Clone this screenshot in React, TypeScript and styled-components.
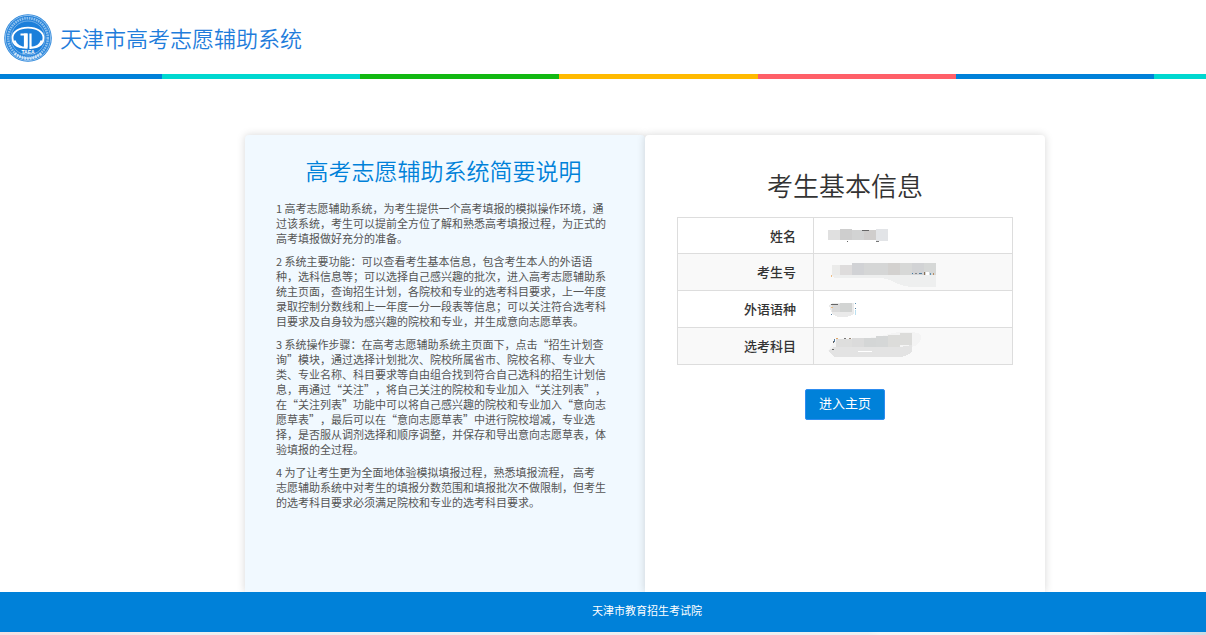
import React from 'react';
import styled, { createGlobalStyle } from 'styled-components';

const GlobalStyle = createGlobalStyle`
  * { box-sizing: border-box; }
  body {
    margin: 0;
    background: #fff;
    color: #333;
    font-family: "Noto Sans", "Noto Sans CJK SC", sans-serif;
    font-size: 11px;
    text-spacing-trim: space-all;
  }
  h1, h2, p { margin: 0; }
`;

const Page = styled.div`
  min-height: 100vh;
  display: flex;
  flex-direction: column;
`;

const Header = styled.header`
  height: 74px;
  padding: 2px 4px 0;
  display: flex;
  align-items: center;
  gap: 8px;
`;

const SiteTitle = styled.h1`
  font-family: "Noto Sans CJK SC", sans-serif;
  font-size: 22px;
  line-height: 32px;
  font-weight: 350;
  color: #1f7ddb;
  padding-bottom: 2px;
`;

const Stripe = styled.div`
  height: 5px;
  background: repeating-linear-gradient(
    90deg,
    #0081d9 0 198px,
    #00d8d0 198px 396px,
    #12b812 396px 595px,
    #ffba00 595px 794px,
    #ff5f68 794px 992px
  ) -36px 0 / calc(100% + 36px) 100% no-repeat;
`;

const Main = styled.main`
  flex: 1;
  display: flex;
  justify-content: center;
  padding: 56px 0 0 84px;
`;

const Card = styled.div`
  width: 800px;
  display: grid;
  grid-template-columns: 1fr 1fr;
`;

const Panel = styled.section<{ $tinted?: boolean }>`
  padding: ${(p) => (p.$tinted ? '18px 34px 0 31px' : '30px 32px 0')};
  background: ${(p) => (p.$tinted ? '#f1f9ff' : '#fff')};
  border-radius: 4px 4px 0 0;
  box-shadow: 0 0 8px rgba(0, 0, 0, 0.16);
`;

const GuideTitle = styled.h2`
  font-family: "Noto Sans CJK SC", sans-serif;
  font-size: 23px;
  line-height: 34px;
  font-weight: 350;
  text-align: center;
  color: #0081d9;
  margin-bottom: 14px;
`;

const GuideText = styled.p`
  line-height: 15px;
  color: #555;
  margin-bottom: 8px;
  white-space: nowrap;
  font-family: "Noto Sans CJK SC", sans-serif;
`;

const InfoTitle = styled(GuideTitle)`
  font-size: 26px;
  line-height: 40px;
  color: #333;
  margin-bottom: 12px;
`;

const InfoTable = styled.table`
  width: 100%;
  border-collapse: collapse;
  font-size: 13px;
`;

const Row = styled.tr`
  height: 37px;
  &:first-child { height: 36px; }
  &:nth-child(even) { background: #f9f9f9; }
`;

const Label = styled.th`
  width: 136px;
  padding: 0 17px 1px 0;
  border: 1px solid #ddd;
  text-align: right;
  font-weight: 500;
`;

const Value = styled.td`
  padding: 4px 0 0 8px;
  border: 1px solid #ddd;
`;

const Mask = styled.svg`
  display: block;
  margin: -4px 0;
`;

const Actions = styled.div`
  display: flex;
  justify-content: center;
  padding-top: 24px;
`;

const EnterButton = styled.button`
  width: 80px;
  height: 31px;
  padding: 0 0 4px;
  border: 1px solid #2d8cf0;
  border-radius: 2px;
  background: #0081d9;
  color: #fff;
  font-family: inherit;
  font-size: 13px;
  cursor: pointer;
`;

const Footer = styled.footer`
  position: relative;
  height: 40px;
  padding-left: 88px;
  background: #0081d9;
  color: #fff;
  line-height: 38px;
  text-align: center;
`;

const BottomEdge = styled.div`
  height: 3px;
  background: linear-gradient(90deg, #f8dfe0, #f5e4e4 8%, #eeeeef 14%, #eeeff0 72%, #f4f5f4 73%, #f1f3f4 90%, #ccdbe5);
`;

const Emblem = () => (
  <svg width="48" height="48" viewBox="0 0 48 48" role="img" aria-label="TAEA">
    <circle cx="24" cy="24" r="23.8" fill="#2583da" />
    <circle cx="24" cy="24" r="22.6" fill="none" stroke="#a9cff2" strokeWidth=".8" />
    <circle cx="24" cy="24" r="19.8" fill="none" stroke="#8dc0ee" strokeWidth="2.6" strokeDasharray="1.6 .8" />
    <circle cx="24" cy="24" r="17" fill="#1c7fda" stroke="#a9cff2" strokeWidth=".6" />
    <path d="M17 33.500C11.500 32 8.500 28.300 8.500 24c0-6 6.500-10.300 15.500-10.300S39.500 18 39.500 24c0 4.300-3 8-8.500 9.500" fill="none" stroke="#fff" strokeWidth="1.800" />
    <path d="M16.500 20.500h6v13.300c-6-.1-10.500-3-12-7.300" fill="none" stroke="#fff" strokeWidth="2" />
    <path d="M22.500 20.500h-1.500v12h1.500zM26.500 19.500v14.300c5.500-.1 9.800-3 11.200-7.300" fill="none" stroke="#fff" strokeWidth="2.200" />
    <text x="24" y="40" textAnchor="middle" fontFamily="Liberation Sans, sans-serif" fontWeight="700" fontSize="5" fill="#fff">TAEA</text>
    <path d="M10.500 39.500Q24 49.500 37.500 39.500" fill="none" stroke="#cfe4f8" strokeWidth="2.600" strokeDasharray="2 .7" />
  </svg>
);

type Block = [number, number, number, number, string];

const records: { label: string; blocks: Block[]; blob?: [string, string]; marks: Block[] }[] = [
  {
    label: '姓名',
    blocks: [[6, 10, 12, 10, '#e0e0e0'], [18, 9, 12, 11, '#cecece'], [30, 10, 12, 10, '#d2d3d3'], [42, 10, 12, 10, '#cfcdcc'], [54, 9, 12, 12, '#e2e4e7']],
    marks: [[40, 10, 7, 1, '#666'], [25, 21, 1, 1, '#666'], [54, 21, 3, 1, '#777']],
  },
  {
    label: '考生号',
    blob: ['M10 19h104v12H90q-12-1-20-6-6-3-14-3H12z', '#eeefef'],
    blocks: [[10, 9, 8, 10, '#ebebea'], [18, 9, 12, 10, '#dedcdc'], [30, 7, 12, 12, '#d1d2d5'], [42, 7, 24, 12, '#d5d6d6'], [66, 7, 12, 12, '#d3d1cf'], [78, 7, 12, 12, '#d7d8d7'], [90, 7, 12, 12, '#d2d3d5'], [102, 7, 12, 12, '#d6d8d7']],
    marks: [[9, 19, 1, 2, '#eebd86'], [90, 17, 1, 1, '#3e78a6'], [93, 17, 2, 1, '#888'], [97, 17, 3, 1, '#527d9c'], [102, 16, 1, 3, '#8c7158'], [104, 16, 3, 3, '#fff'], [108, 17, 1, 2, '#6393b3'], [111, 17, 1, 2, '#b98e66']],
  },
  {
    label: '外语语种',
    blob: ['M7 13q2-3 6-3h19v11q-6 4-14 3-5 0-8-4z', '#eaeaea'],
    blocks: [[10, 11, 8, 8, '#dadada'], [18, 10, 12, 9, '#d2d4d3']],
    marks: [[9, 11, 7, 1, '#666'], [9, 14, 2, 1, '#eebd86'], [9, 21, 1, 1, '#577da0'], [33, 10, 1, 1, '#5c92b5'], [33, 15, 1, 1, '#527d9c'], [33, 17, 1, 5, '#b9dff0']],
  },
  {
    label: '选考科目',
    blob: ['M6 21l6-9 20-3 22-2 22-5h12q11 0 11 5 0 8-10 10-8 10-24 9H12z', '#f4f4f4'],
    blocks: [[14, 9, 16, 8, '#dededd'], [30, 8, 12, 9, '#dbdbdb'], [42, 8, 12, 9, '#d4d6d6'], [54, 6, 12, 11, '#d5d7d7'], [66, 5, 12, 12, '#dcdcda'], [78, 3, 12, 12, '#dcdcda']],
    marks: [[12, 9, 1, 3, '#557a9d'], [11, 11, 1, 2, '#666'], [14, 8, 2, 1, '#e0a76a'], [22, 8, 2, 1, '#777'], [27, 8, 2, 1, '#998877'], [10, 19, 2, 1, '#666'], [36, 21, 14, 1, '#fff']],
  },
];

const smudges: Record<string, string> = {
  选考科目: 'M6 21l6-4h66l12-2v7q-6 5-14 5H12z',
};

const guide: string[][] = [
  [
    '1 高考志愿辅助系统，为考生提供一个高考填报的模拟操作环境，通',
    '过该系统，考生可以提前全方位了解和熟悉高考填报过程，为正式的',
    '高考填报做好充分的准备。',
  ],
  [
    '2 系统主要功能：可以查看考生基本信息，包含考生本人的外语语',
    '种，选科信息等；可以选择自己感兴趣的批次，进入高考志愿辅助系',
    '统主页面，查询招生计划，各院校和专业的选考科目要求，上一年度',
    '录取控制分数线和上一年度一分一段表等信息；可以关注符合选考科',
    '目要求及自身较为感兴趣的院校和专业，并生成意向志愿草表。',
  ],
  [
    '3 系统操作步骤：在高考志愿辅助系统主页面下，点击“招生计划查',
    '询”模块，通过选择计划批次、院校所属省市、院校名称、专业大',
    '类、专业名称、科目要求等自由组合找到符合自己选科的招生计划信',
    '息，再通过“关注”，将自己关注的院校和专业加入“关注列表”，',
    '在“关注列表”功能中可以将自己感兴趣的院校和专业加入“意向志',
    '愿草表”，最后可以在“意向志愿草表”中进行院校增减，专业选',
    '择，是否服从调剂选择和顺序调整，并保存和导出意向志愿草表，体',
    '验填报的全过程。',
  ],
  [
    '4 为了让考生更为全面地体验模拟填报过程，熟悉填报流程， 高考',
    '志愿辅助系统中对考生的填报分数范围和填报批次不做限制，但考生',
    '的选考科目要求必须满足院校和专业的选考科目要求。',
  ],
];

const rects = (list: Block[]) =>
  list.map(([x, y, w, h, fill], i) => <rect key={i} x={x} y={y} width={w} height={h} fill={fill} />);

export default function App() {
  return (
    <Page lang="zh-CN">
      <GlobalStyle />
      <Header>
        <Emblem />
        <SiteTitle>天津市高考志愿辅助系统</SiteTitle>
      </Header>
      <Stripe />
      <Main>
        <Card>
          <Panel $tinted>
            <GuideTitle>高考志愿辅助系统简要说明</GuideTitle>
            {guide.map((lines, i) => (
              <GuideText key={i}>
                {lines.map((line, j) => (
                  <React.Fragment key={j}>
                    {j > 0 && <br />}
                    {line}
                  </React.Fragment>
                ))}
              </GuideText>
            ))}
          </Panel>
          <Panel>
            <InfoTitle>考生基本信息</InfoTitle>
            <InfoTable>
              <tbody>
                {records.map((r) => (
                  <Row key={r.label}>
                    <Label scope="row">{r.label}</Label>
                    <Value>
                      <Mask width="120" height="36" viewBox="0 0 120 36" shapeRendering="crispEdges" aria-hidden="true">
                        {r.blob && <path d={r.blob[0]} fill={r.blob[1]} />}
                        {smudges[r.label] && <path d={smudges[r.label]} fill="#e3e3e3" />}
                        {rects(r.blocks)}
                        {rects(r.marks)}
                      </Mask>
                    </Value>
                  </Row>
                ))}
              </tbody>
            </InfoTable>
            <Actions>
              <EnterButton type="button">进入主页</EnterButton>
            </Actions>
          </Panel>
        </Card>
      </Main>
      <Footer>天津市教育招生考试院</Footer>
      <BottomEdge />
    </Page>
  );
}
